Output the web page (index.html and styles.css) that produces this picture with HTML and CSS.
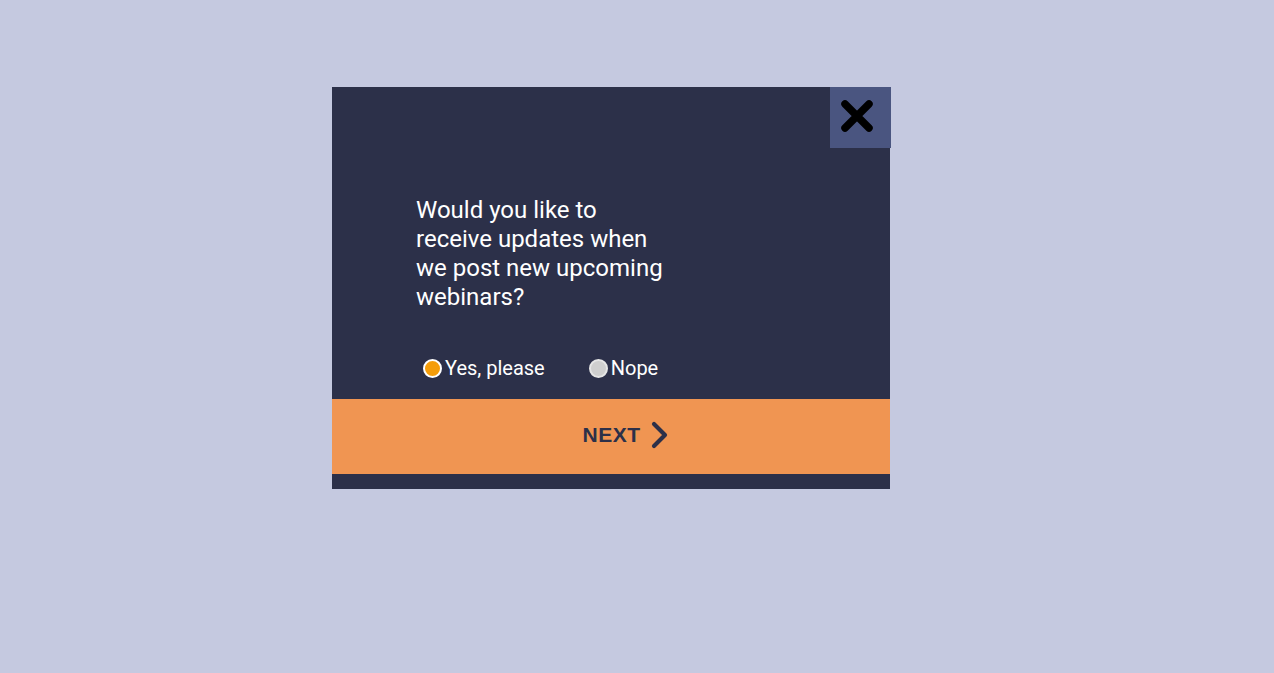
FILE: index.html
```html
<!DOCTYPE html>
<html>
<head>
<meta charset="utf-8">
<link rel="stylesheet" href="styles.css">
</head>
<body>
<div class="modal">
  <button class="close" aria-label="Close">
    <svg width="36" height="36" viewBox="0 0 36 36"><path d="M6 6 L30 30 M30 6 L6 30" stroke="#000" stroke-width="7.5" stroke-linecap="round" fill="none"/></svg>
  </button>
  <div class="content">
    <p class="question">Would you like to receive updates when we post new upcoming webinars?</p>
    <div class="options">
      <label class="option"><span class="dot dot-on"></span>Yes, please</label>
      <label class="option"><span class="dot dot-off"></span>Nope</label>
    </div>
  </div>
  <div class="next">
    <span class="next-label">NEXT</span>
    <svg width="20" height="28" viewBox="0 0 20 28"><path d="M4 3 L15 14 L4 25" stroke="#2c3049" stroke-width="4.2" stroke-linecap="round" stroke-linejoin="round" fill="none"/></svg>
  </div>
  <div class="foot"></div>
</div>
</body>
</html>
```
FILE: styles.css
```css
html, body { margin: 0; padding: 0; }
body {
  background: #c5c9e0;
  width: 1274px;
  height: 673px;
  overflow: hidden;
  font-family: Roboto, "Liberation Sans", sans-serif;
}
.modal {
  position: relative;
  margin: 87px 0 0 332px;
  width: 558px;
  background: #2c3049;
  display: flex;
  flex-direction: column;
}
.close {
  position: absolute;
  top: 0;
  right: -1px;
  width: 61px;
  height: 61px;
  background: #4a5580;
  border: 0;
  padding: 0;
  display: flex;
  align-items: center;
  justify-content: center;
}
.close svg { margin-left: -7px; margin-top: -3px; }
.content {
  padding: 109px 0 0 84px;
  height: 203px;
}
.question {
  margin: 0;
  width: 252px;
  color: #fff;
  font-size: 24px;
  line-height: 29px;
}
.options {
  display: flex;
  gap: 44px;
  margin: 44px 0 0 7px;
}
.option {
  display: flex;
  align-items: center;
  color: #fff;
  font-size: 20px;
  line-height: 24px;
  gap: 3px;
}
.dot {
  width: 15px;
  height: 15px;
  border-radius: 50%;
  border: 2px solid #fff;
  box-sizing: content-box;
}
.dot-on { background: #f59d0a; }
.dot-off { background: #cfcfcf; border-color: #e6e6e6; }
.next {
  height: 75px;
  background: #f09552;
  display: flex;
  align-items: center;
  justify-content: center;
  gap: 9px;
  padding: 0 0 3px 30px;
  box-sizing: border-box;
}
.next-label {
  font-family: "Liberation Sans", Arial, sans-serif;
  font-weight: bold;
  font-size: 21px;
  color: #2c3049;
  letter-spacing: 0.5px;
}
.foot { height: 15px; }
```
